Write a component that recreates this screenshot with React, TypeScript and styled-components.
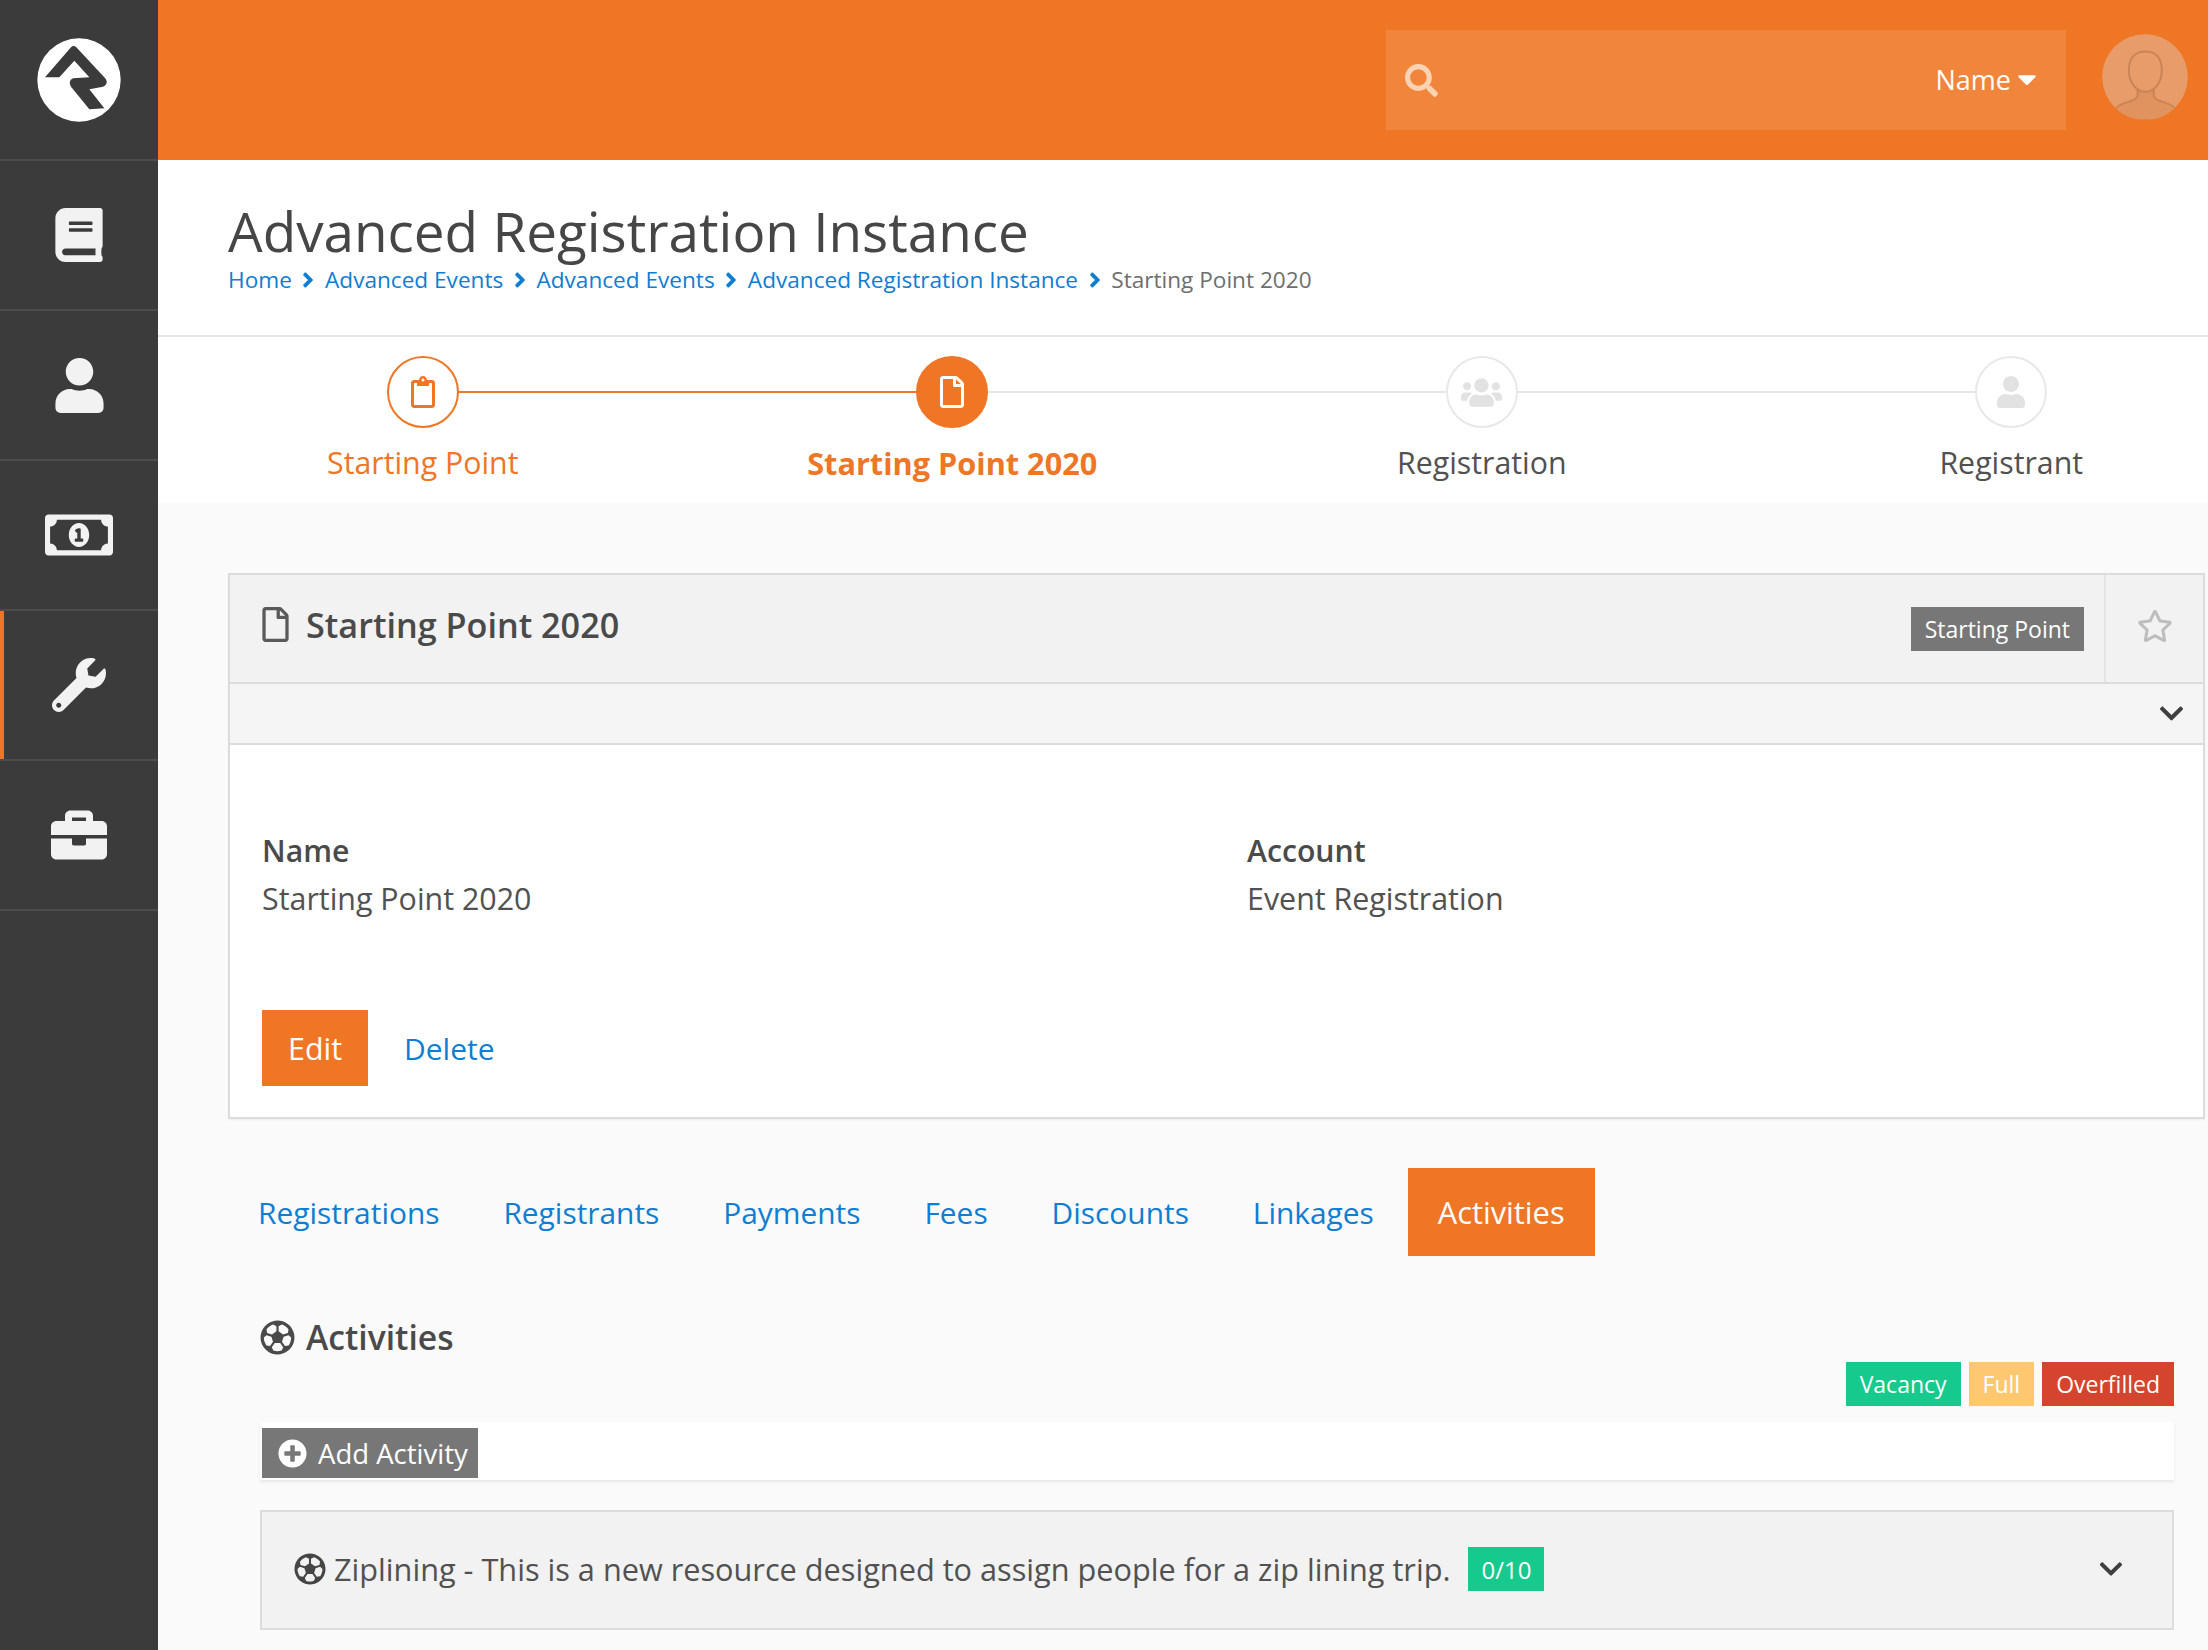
import React from "react";
import styled, { createGlobalStyle } from "styled-components";
import { FaBook, FaUser, FaRegMoneyBillAlt, FaWrench, FaBriefcase, FaSearch, FaCaretDown, FaRegClipboard, FaRegFile, FaUsers, FaRegStar, FaRegFutbol, FaPlusCircle, FaChevronDown, FaAngleRight } from "react-icons/fa";

const ORANGE = "#ee7625";
const LINK = "#0f7dd2";
const Global = createGlobalStyle`
  html, body { margin: 0; padding: 0; height: 100%; overflow: hidden; background: #fafafa; }
  body { font-family: "Open Sans", sans-serif; color: #515151; }
  * { box-sizing: border-box; }
`;
const Shell = styled.div`display: flex; width: 2208px; height: 1650px; overflow: hidden;`;
const Sidebar = styled.nav`width: 158px; flex: none; background: #3b3b3b; display: flex; flex-direction: column;`;
const LogoCell = styled.div`height: 161px; border-bottom: 2px solid #4d4d4d; display: flex; align-items: center; justify-content: center;`;
const NavItem = styled.div<{ $active?: boolean }>`
  height: 150px; border-bottom: 2px solid #4d4d4d; display: flex; align-items: center; justify-content: center;
  color: #f2f2f2;
  box-shadow: ${(p) => (p.$active ? `inset 4px 0 0 ${ORANGE}` : "none")};
`;
const Main = styled.div`flex: 1; min-width: 0; display: flex; flex-direction: column;`;
const TopBar = styled.header`height: 160px; flex: none; background: ${ORANGE}; display: flex; align-items: center; justify-content: flex-end; padding-right: 20px;`;
const Search = styled.div`width: 680px; height: 100px; background: #f2853c; display: flex; align-items: center; padding: 0 24px 0 19px; color: #fbd3b3; font-size: 33px;`;
const SearchField = styled.div`margin-left: auto; margin-bottom: 2px; color: #fff; font-size: 27px; display: flex; align-items: center; gap: 1px;`;
const Avatar = styled.div`width: 86px; height: 86px; border-radius: 50%; margin: 0 0 7px 36px; overflow: hidden;`;
const PageHead = styled.div`height: 177px; flex: none; background: #fff; border-bottom: 2px solid #e6e6e6; padding: 39px 0 0 70px;`;
const Title = styled.h1`margin: 0; font-size: 54.8px; line-height: 64px; font-weight: 400; color: #464646;`;
const Crumbs = styled.div`display: flex; align-items: center; font-size: 22.6px; line-height: 32px; margin-top: 1px; color: #6e6e6e;`;
const CrumbLink = styled.span`color: ${LINK};`;
const CrumbSep = styled.span`display: inline-flex; color: ${LINK}; font-size: 24px; margin: 0 4.6px;`;
const StepsBar = styled.div`height: 166px; flex: none; background: #fff; display: grid; grid-template-columns: repeat(4, 529.5px); overflow: hidden;`;
const Step = styled.div<{ $state: "done" | "active" | "todo" }>`
  display: flex; flex-direction: column; align-items: center; position: relative; padding-top: 19px;
  font-size: ${(p) => (p.$state === "active" ? "30.7px" : "30.3px")}; line-height: 40px;
  font-weight: ${(p) => (p.$state === "active" ? 700 : 400)};
  color: ${(p) => (p.$state === "todo" ? "#515151" : ORANGE)};
`;
const StepLine = styled.span<{ $on?: boolean; $left?: boolean }>`
  position: absolute; top: 54px; height: 2px; width: 50%;
  ${(p) => (p.$left ? "left: 0;" : "right: 0;")}
  background: ${(p) => (p.$on ? ORANGE : "#e6e6e6")};
`;
const Circle = styled.span<{ $state: "done" | "active" | "todo" }>`
  position: relative; z-index: 1; width: 72px; height: 72px; border-radius: 50%; display: flex; align-items: center; justify-content: center;
  margin-bottom: 15px;
  background: ${(p) => (p.$state === "active" ? ORANGE : "#fff")};
  border: 2px solid ${(p) => (p.$state === "todo" ? "#e8e8e8" : ORANGE)};
  color: ${(p) => (p.$state === "active" ? "#fff" : p.$state === "done" ? ORANGE : "#e2e2e2")};
`;
const Content = styled.div`flex: 1; padding: 70px 3px 0 70px; background: #fafafa;`;
const Panel = styled.section`border: 2px solid #dcdcdc; background: #fff; height: 546px; display: flex; flex-direction: column; box-shadow: 0 1px 2px rgba(0,0,0,.05);`;
const PanelHead = styled.div`height: 109px; flex: none; background: #f2f2f2; border-bottom: 2px solid #dcdcdc; display: flex; align-items: center; padding-left: 28px;`;
const PanelTitle = styled.h2`margin: 0 0 8px; display: flex; align-items: center; gap: 13px; font-size: 34.2px; font-weight: 600; color: #4a4a4a; svg { font-size: 35px; color: #5a5a5a; }`;
const Badge = styled.span<{ $bg: string }>`display: inline-flex; align-items: center; justify-content: center; height: 44px; padding: 0 14px; font-size: 23px; color: #fff; background: ${(p) => p.$bg};`;
const HeadRight = styled.div`margin-left: auto; display: flex; align-items: center; height: 100%;`;
const Favorite = styled.div`width: 99px; height: 100%; margin-left: 20px; padding-bottom: 5px; border-left: 2px solid #e4e4e4; display: flex; align-items: center; justify-content: center; font-size: 36px; color: #bdbdbd;`;
const SubBar = styled.div`height: 61px; flex: none; background: #f5f5f5; border-bottom: 2px solid #dcdcdc; display: flex; align-items: center; justify-content: flex-end; padding-right: 18px; font-size: 27px; color: #3f3f3f;`;
const PanelBody = styled.div`flex: 1; padding: 86px 32px 0;`;
const Columns = styled.div`display: grid; grid-template-columns: 985px 1fr;`;
const FieldLabel = styled.div`font-size: 30.2px; line-height: 40px; font-weight: 600; color: #4a4a4a;`;
const FieldValue = styled.div`font-size: 30.4px; line-height: 40px; margin-top: 8px; color: #515151;`;
const Actions = styled.div`display: flex; align-items: center; gap: 36px; margin-top: 91px;`;
const EditBtn = styled.span`display: flex; align-items: center; justify-content: center; width: 106px; height: 76px; background: ${ORANGE}; color: #fff; font-size: 30.4px;`;
const TextLink = styled.span`color: ${LINK}; font-size: 30px;`;
const Tabs = styled.div`display: flex; gap: 3.9px; margin-top: 49px;`;
const Tab = styled.span<{ $active?: boolean }>`
  height: 88px; padding: 0 30px; display: flex; align-items: center;
  font-size: ${(p) => (p.$active ? "30.8px" : "29.9px")};
  background: ${(p) => (p.$active ? ORANGE : "transparent")};
  color: ${(p) => (p.$active ? "#fff" : LINK)};
`;
const Section = styled.div`padding: 0 31px 0 32px; margin-top: 59px;`;
const SectionHead = styled.div`display: flex; justify-content: space-between; align-items: flex-start; height: 107px;`;
const SectionTitle = styled.h3`margin: 0; display: flex; align-items: center; gap: 11px; font-size: 33.7px; font-weight: 600; color: #4a4a4a; line-height: 44px; svg { font-size: 35px; }`;
const Legend = styled.div`display: flex; gap: 8px; margin-top: 47px;`;
const GridBar = styled.div`height: 58px; background: #fff; box-shadow: 0 2px 3px rgba(0,0,0,.08); padding: 6px 2px 0;`;
const AddBtn = styled.span`display: inline-flex; align-items: center; gap: 11px; height: 50px; padding: 0 10px 0 16px; background: #777; color: #fff; font-size: 27.5px; svg { font-size: 29px; }`;
const Item = styled.div`height: 120px; margin-top: 30px; padding: 0 48px 2px 32px; background: #f2f2f2; border: 2px solid #dcdcdc; display: flex; align-items: center; font-size: 30.7px; color: #515151;`;
const ItemIcon = styled.span`display: inline-flex; font-size: 32px; margin-right: 8px; color: #454545;`;
const ItemBadge = styled(Badge)`margin-left: 18px; padding: 0 13px; font-size: 24px;`;
const ItemChevron = styled.span`margin-left: auto; display: inline-flex; font-size: 26px; color: #3f3f3f;`;

const Logo = () => (
  <svg width="84" height="84" viewBox="48 55 252 250">
    <circle cx="174" cy="180" r="125" fill="#fff" />
    <path d="M72 172 L150 82 Q158 74 166 82 L254 176 Q264 192 246 200 L205 208 L250 265 L205 268 L150 200 Q140 182 156 175 L205 172 L160 122 L115 172 Z" fill="#3b3b3b" />
  </svg>
);
const AvatarArt = () => (
  <svg width="86" height="86" viewBox="36 42 256 256">
    <circle cx="164" cy="170" r="128" fill="#e79c69" />
    <path d="M78 262 C92 244 140 244 142 226 V210 H190 V226 C192 244 238 244 252 262 V298 H78 Z" fill="#e0935f" stroke="#cb8456" strokeWidth="6" />
    <path d="M165 94 C196 94 214 114 214 150 C214 186 192 214 165 214 C138 214 116 186 116 150 C116 114 134 94 165 94 Z" fill="#e79c69" stroke="#cb8456" strokeWidth="6" />
  </svg>
);

const steps = [
  { label: "Starting Point", state: "done" as const, Icon: FaRegClipboard, size: 32 },
  { label: "Starting Point 2020", state: "active" as const, Icon: FaRegFile, size: 32 },
  { label: "Registration", state: "todo" as const, Icon: FaUsers, size: 41 },
  { label: "Registrant", state: "todo" as const, Icon: FaUser, size: 32 },
];
const crumbs = ["Home", "Advanced Events", "Advanced Events", "Advanced Registration Instance"];
const tabs = ["Registrations", "Registrants", "Payments", "Fees", "Discounts", "Linkages", "Activities"];

export default function App() {
  return (
    <Shell>
      <Global />
      <Sidebar>
        <LogoCell><Logo /></LogoCell>
        <NavItem><FaBook size={54} /></NavItem>
        <NavItem><FaUser size={55} /></NavItem>
        <NavItem><FaRegMoneyBillAlt size={68} /></NavItem>
        <NavItem $active><FaWrench size={54} /></NavItem>
        <NavItem><FaBriefcase size={56} /></NavItem>
      </Sidebar>
      <Main>
        <TopBar>
          <Search><FaSearch /><SearchField>Name <FaCaretDown size={30} /></SearchField></Search>
          <Avatar><AvatarArt /></Avatar>
        </TopBar>
        <PageHead>
          <Title>Advanced Registration Instance</Title>
          <Crumbs>
            {crumbs.map((c, i) => (
              <React.Fragment key={i}><CrumbLink>{c}</CrumbLink><CrumbSep><FaAngleRight /></CrumbSep></React.Fragment>
            ))}
            Starting Point 2020
          </Crumbs>
        </PageHead>
        <StepsBar>
          {steps.map((s, i) => (
            <Step key={s.label} $state={s.state}>
              {i > 0 && <StepLine $left $on={i === 1} />}
              {i < steps.length - 1 && <StepLine $on={i === 0} />}
              <Circle $state={s.state}><s.Icon size={s.size} /></Circle>
              {s.label}
            </Step>
          ))}
        </StepsBar>
        <Content>
          <Panel>
            <PanelHead>
              <PanelTitle><FaRegFile />Starting Point 2020</PanelTitle>
              <HeadRight>
                <Badge $bg="#777">Starting Point</Badge>
                <Favorite><FaRegStar /></Favorite>
              </HeadRight>
            </PanelHead>
            <SubBar><FaChevronDown /></SubBar>
            <PanelBody>
              <Columns>
                <div><FieldLabel>Name</FieldLabel><FieldValue>Starting Point 2020</FieldValue></div>
                <div><FieldLabel>Account</FieldLabel><FieldValue>Event Registration</FieldValue></div>
              </Columns>
              <Actions><EditBtn>Edit</EditBtn><TextLink>Delete</TextLink></Actions>
            </PanelBody>
          </Panel>
          <Tabs>{tabs.map((t) => <Tab key={t} $active={t === "Activities"}>{t}</Tab>)}</Tabs>
          <Section>
            <SectionHead>
              <SectionTitle><FaRegFutbol />Activities</SectionTitle>
              <Legend>
                <Badge $bg="#16c98d">Vacancy</Badge>
                <Badge $bg="#ffc870">Full</Badge>
                <Badge $bg="#d4442e">Overfilled</Badge>
              </Legend>
            </SectionHead>
            <GridBar><AddBtn><FaPlusCircle />Add Activity</AddBtn></GridBar>
            <Item>
              <ItemIcon><FaRegFutbol /></ItemIcon>
              Ziplining - This is a new resource designed to assign people for a zip lining trip.
              <ItemBadge $bg="#16c98d">0/10</ItemBadge>
              <ItemChevron><FaChevronDown /></ItemChevron>
            </Item>
          </Section>
        </Content>
      </Main>
    </Shell>
  );
}
